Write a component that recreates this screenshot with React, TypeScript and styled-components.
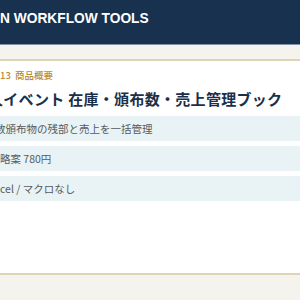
import styled, { createGlobalStyle } from "styled-components";

const GlobalStyle = createGlobalStyle`
  html, body {
    margin: 0;
    padding: 0;
    background: #f5f3ee;
    overflow: hidden;
  }
  body {
    font-family: "Noto Sans CJK JP", "Noto Sans", sans-serif;
  }
`;

const Header = styled.header`
  height: 44px;
  box-sizing: content-box;
  background: #17314f;
  border-bottom: 1px solid #7f93aa;
  white-space: nowrap;
`;

const Brand = styled.h1`
  margin: 0;
  padding-top: 12px;
  color: #ffffff;
  font-family: "Liberation Sans", Arial, sans-serif;
  font-size: 13.75px;
  font-weight: 700;
  line-height: 14px;
`;

const Main = styled.main`
  padding-top: 14px;
`;

const Card = styled.section`
  background: #ffffff;
  border-top: 2px solid #e2d2b4;
  border-bottom: 2px solid #e2d2b4;
  height: 206px;
  padding-top: 6px;
  box-sizing: content-box;
  white-space: nowrap;
  overflow: hidden;
`;

const Label = styled.div`
  color: #b98a3a;
  font-size: 9.5px;
  line-height: 16px;
  font-weight: 500;
`;

const Title = styled.h2`
  margin: 5px 0 0;
  color: #1b2f4a;
  font-size: 15px;
  line-height: 22px;
  font-weight: 700;
  letter-spacing: 0.3px;
`;

const Facts = styled.ul`
  list-style: none;
  margin: 6px 0 0;
  padding: 0;
  display: flex;
  flex-direction: column;
  gap: 5px;
`;

const Fact = styled.li`
  background: #e9f2f4;
  height: 25px;
  display: flex;
  align-items: center;
  color: #555b60;
  font-size: 10.5px;
`;

const Lead = styled.span<{ $cut: number }>`
  display: inline-block;
  margin-left: -${(p) => p.$cut}px;
`;

export default function App() {
  return (
    <>
      <GlobalStyle />
      <Header>
        <Brand>N WORKFLOW TOOLS</Brand>
      </Header>
      <Main>
        <Card>
          <Label>13&nbsp; 商品概要</Label>
          <Title>
            <Lead $cut={12}>人</Lead>イベント 在庫・頒布数・売上管理ブック
          </Title>
          <Facts>
            <Fact>
              <span>
                <Lead $cut={5}>数</Lead>頒布物の残部と売上を一括管理
              </span>
            </Fact>
            <Fact>
              <span>略案 780円</span>
            </Fact>
            <Fact>
              <span>cel / マクロなし</span>
            </Fact>
          </Facts>
        </Card>
      </Main>
    </>
  );
}
